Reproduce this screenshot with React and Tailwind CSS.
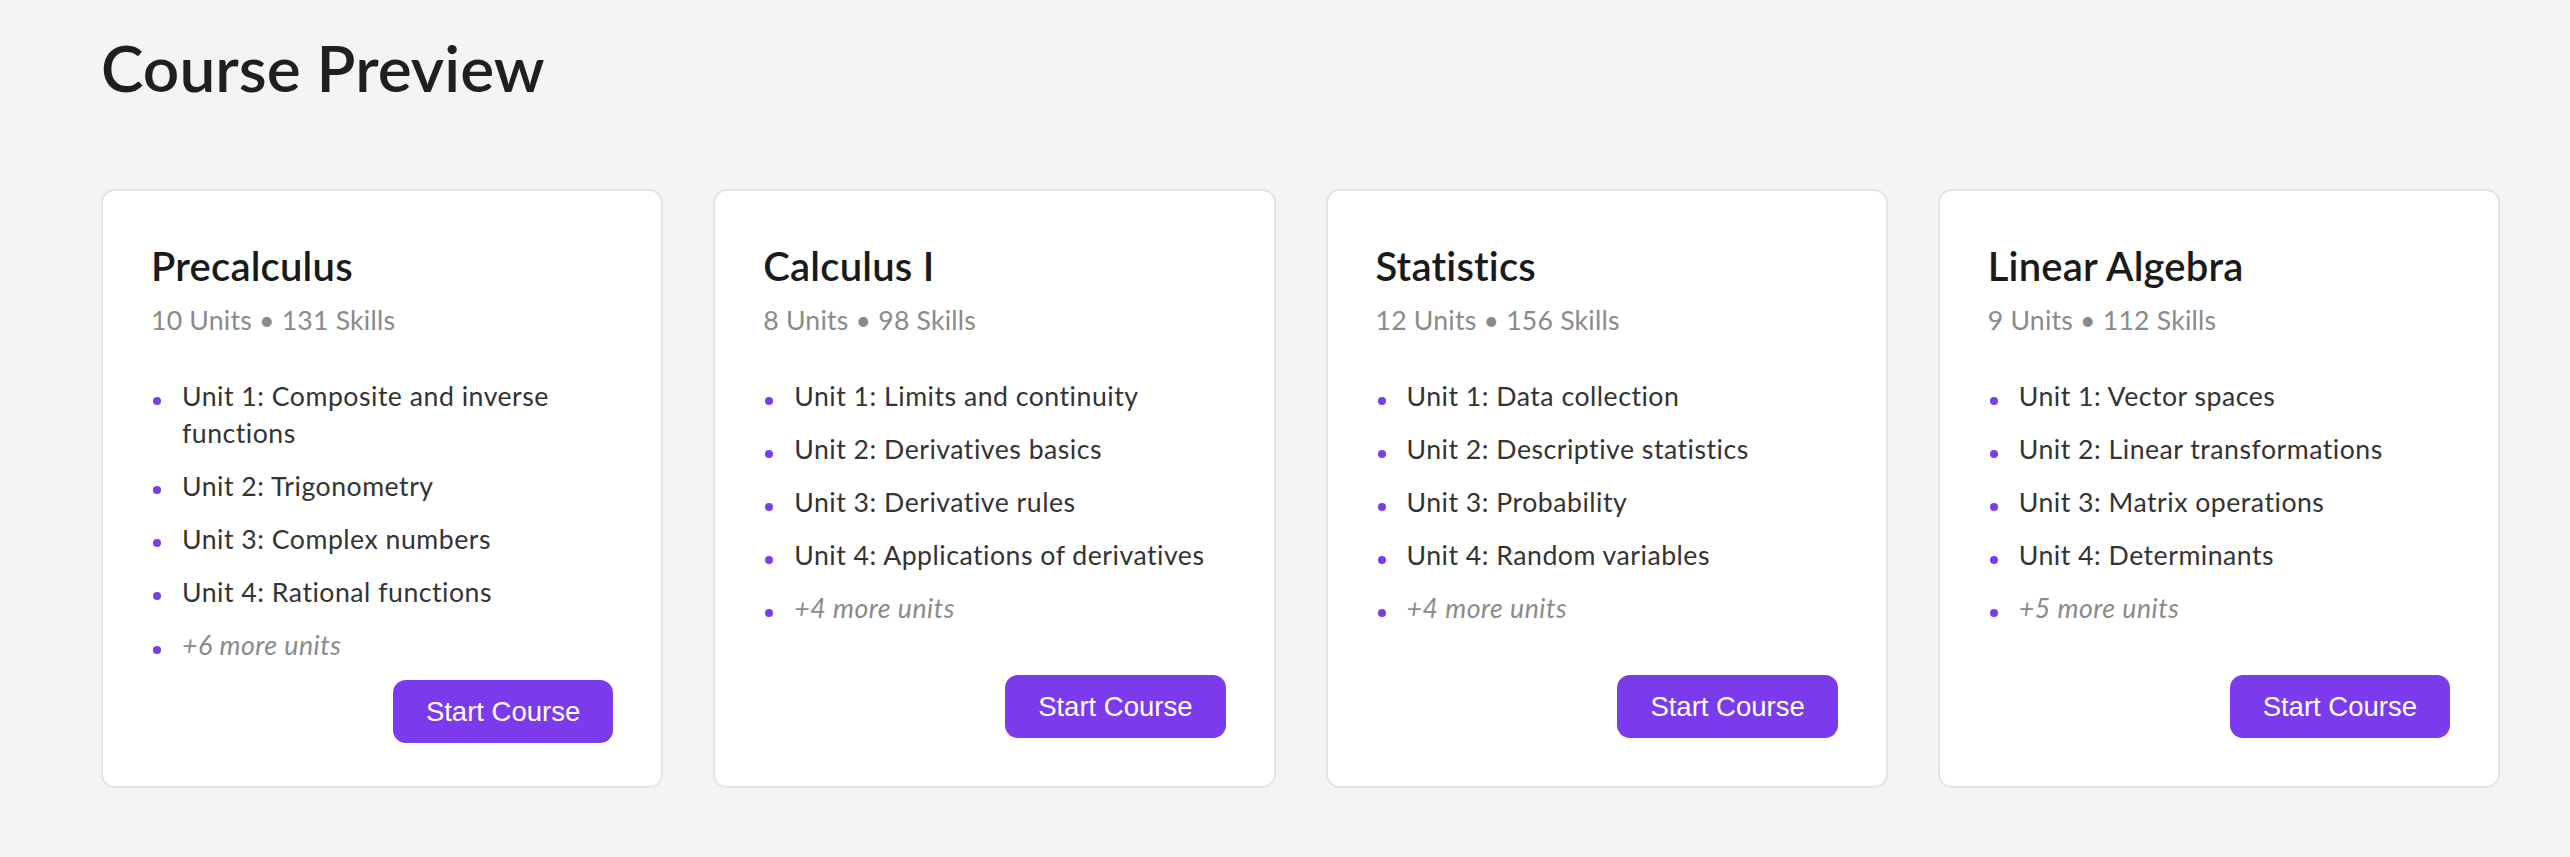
import React from "react";

const courses = [
  {
    title: "Precalculus",
    meta: "10 Units • 131 Skills",
    units: [
      "Unit 1: Composite and inverse functions",
      "Unit 2: Trigonometry",
      "Unit 3: Complex numbers",
      "Unit 4: Rational functions",
    ],
    more: "+6 more units",
  },
  {
    title: "Calculus I",
    meta: "8 Units • 98 Skills",
    units: [
      "Unit 1: Limits and continuity",
      "Unit 2: Derivatives basics",
      "Unit 3: Derivative rules",
      "Unit 4: Applications of derivatives",
    ],
    more: "+4 more units",
  },
  {
    title: "Statistics",
    meta: "12 Units • 156 Skills",
    units: [
      "Unit 1: Data collection",
      "Unit 2: Descriptive statistics",
      "Unit 3: Probability",
      "Unit 4: Random variables",
    ],
    more: "+4 more units",
  },
  {
    title: "Linear Algebra",
    meta: "9 Units • 112 Skills",
    units: [
      "Unit 1: Vector spaces",
      "Unit 2: Linear transformations",
      "Unit 3: Matrix operations",
      "Unit 4: Determinants",
    ],
    more: "+5 more units",
  },
];

function Item({ children, muted }) {
  return (
    <li className="flex mb-[16.4px] leading-[36.7px]">
      <span className="shrink-0 w-[8px] h-[8px] rounded-full bg-[#7c3aed] mt-[18.5px] ml-[2px] mr-[21px]" />
      <span className={muted ? "italic text-[#8a8a8a]" : "text-[#333333]"}>{children}</span>
    </li>
  );
}

function Card({ c }) {
  return (
    <div className="h-[599px] flex flex-col bg-white border-2 border-[#e4e4e7] rounded-[14px] p-[48px]">
      <h2 className="text-[40px] leading-[53px] font-semibold tracking-[0.2px] text-[#1a1a1a] pt-[1px]">{c.title}</h2>
      <p className="mt-[7px] text-[26.67px] leading-[40px] tracking-[0.2px] text-[#8a8a8a]">{c.meta}</p>
      <ul className="mt-[38px] text-[26.67px] tracking-[0.5px]">
        {c.units.map((u) => (
          <Item key={u}>{u}</Item>
        ))}
        <Item muted>{c.more}</Item>
      </ul>
      <button className="mt-auto self-end shrink-0 bg-[#7c3aed] text-white rounded-[13px] px-[33px] py-[16px] leading-[31px] text-[27.5px] font-['Liberation_Sans',Arial,sans-serif]">
        Start Course
      </button>
    </div>
  );
}

export default function App() {
  return (
    <div className="min-h-screen bg-[#f3f4f6] font-['Lato',sans-serif] pl-[101px] pt-[34px]">
      <h1 className="text-[64px] leading-[67px] font-semibold text-[#1f1f1f]">Course Preview</h1>
      <div className="mt-[88px] w-[2399px] grid grid-cols-4 gap-[50px]">
        {courses.map((c) => (
          <Card key={c.title} c={c} />
        ))}
      </div>
    </div>
  );
}
